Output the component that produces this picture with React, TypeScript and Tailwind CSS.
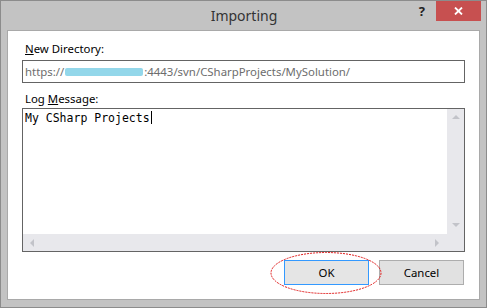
import React from 'react';

const ui = { fontFamily: '"Noto Sans", "Open Sans", Arial, sans-serif' };
const mono = { fontFamily: '"DejaVu Sans Mono", "Liberation Mono", monospace' };

const Arrow: React.FC<{ dir: 'up' | 'down' | 'left' | 'right' }> = ({ dir }) => {
    const pts = {
        up: '0,4 4,0 8,4',
        down: '0,0 8,0 4,4',
        left: '4,0 4,8 0,4',
        right: '0,0 0,8 4,4',
    }[dir];
    const vertical = dir === 'up' || dir === 'down';
    return (
        <svg width={vertical ? 8 : 4} height={vertical ? 4 : 8} viewBox={vertical ? '0 0 8 4' : '0 0 4 8'}>
            <polygon points={pts} fill="#c2c3c9" />
        </svg>
    );
};

const LogBox: React.FC = () => (
    <div className="mt-[1px] h-[144px] border border-[#646464] bg-white grid grid-cols-[1fr_17px] grid-rows-[1fr_17px]">
        <div className="pl-[2px] pt-[2px] text-[11.5px] leading-[14px] text-black" style={mono}>
            My CSharp Projects<span className="inline-block w-px h-[13px] bg-black align-[-2px] ml-[1px]" />
        </div>
        <div className="bg-[#e8e8ec] flex flex-col items-center justify-between pt-[6px] pb-[7px]">
            <Arrow dir="up" />
            <Arrow dir="down" />
        </div>
        <div className="bg-[#e8e8ec] flex items-center justify-between pl-[7px] pr-[8px]">
            <Arrow dir="left" />
            <Arrow dir="right" />
        </div>
        <div className="bg-[#e8e8ec]" />
    </div>
);

const App: React.FC = () => {
    return (
        <div className="w-[487px] h-[308px] border border-[#8c8c8c] bg-[#c3c3c3] px-[6px] pb-[7px] flex flex-col" style={ui}>
            <div className="h-[29px] grid grid-cols-[1fr_auto_1fr] -mr-[1px]">
                <div />
                <div className="pt-[4px] text-[14px] leading-[22px] text-[#333]">Importing</div>
                <div className="flex justify-end items-start">
                    <span className="mt-[2px] mr-[11px] text-[13px] leading-[16px] font-bold text-[#222]">?</span>
                    <button className="w-[45px] h-[20px] bg-[#c75050] flex items-center justify-center">
                        <svg width="9" height="8" viewBox="0 0 9 8">
                            <path d="M1 0.5 L8 7.5 M8 0.5 L1 7.5" stroke="#fff" strokeWidth="1.8" />
                        </svg>
                    </button>
                </div>
            </div>

            <div className="flex-1 border border-[#a9a9a9] bg-white px-[14px] pt-[10px] flex flex-col">
                <label className="pl-[3px] h-[16px] text-[11.4px] leading-[16px] text-black">
                    <span className="underline">N</span>ew Directory:
                </label>
                <div className="mt-[3px] h-[23px] border border-[#646464] flex items-center pl-[2px] text-[11.4px] text-[#6d6d6d] whitespace-nowrap overflow-hidden">
                    https://<span className="inline-block w-[78px] h-[8px] bg-[#93d7ea] rounded-[2px] mx-[1px]" />:4443/svn/CSharpProjects/MySolution/
                </div>

                <label className="mt-[8px] pl-[3px] h-[16px] text-[11.4px] leading-[16px] text-black">
                    Log <span className="underline">M</span>essage:
                </label>
                <LogBox />

                <div className="mt-[8px] flex justify-end gap-[10px] pr-px relative">
                    <button className="w-[85px] h-[25px] border border-[#3399ff] bg-[#e5e5e5] text-[11.4px] text-black">OK</button>
                    <button className="w-[85px] h-[25px] border border-[#adadad] bg-[#e1e1e1] text-[11.4px] text-black">Cancel</button>
                    <svg className="absolute left-[247px] -top-[9px] pointer-events-none" width="114" height="44" viewBox="0 0 114 44">
                        <ellipse cx="57" cy="22" rx="55" ry="20.5" fill="none" stroke="#e01818" strokeWidth="1" strokeDasharray="2 1" />
                    </svg>
                </div>
            </div>
        </div>
    );
};

export default App;
